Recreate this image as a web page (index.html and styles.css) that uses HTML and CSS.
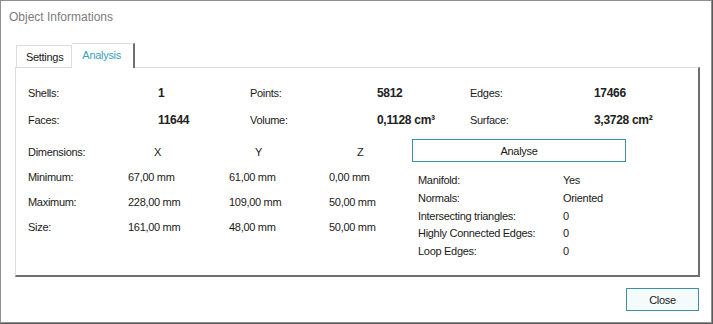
FILE: index.html
```html
<!DOCTYPE html>
<html lang="en">

<head>
    <meta charset="UTF-8">
    <title>Object Informations</title>
    <link rel="stylesheet" href="styles.css">
</head>

<body>
    <div class="window">
        <div class="title">Object Informations</div>

        <!-- Abas -->
        <div class="tabs">
            <div class="tab">Settings</div>
            <div class="tab tab-active">Analysis</div>
        </div>

        <div class="panel">
            <!-- Contagens -->
            <div class="stats">
                <span>Shells:</span><b>1</b>
                <span>Points:</span><b>5812</b>
                <span>Edges:</span><b>17466</b>
                <span>Faces:</span><b>11644</b>
                <span>Volume:</span><b>0,1128 cm³</b>
                <span>Surface:</span><b>3,3728 cm²</b>
            </div>

            <div class="lower">
                <!-- Dimensões -->
                <div class="dims">
                    <span>Dimensions:</span>
                    <span class="axis">X</span>
                    <span class="axis">Y</span>
                    <span class="axis axis-z">Z</span>

                    <span>Minimum:</span>
                    <span>67,00 mm</span>
                    <span>61,00 mm</span>
                    <span>0,00 mm</span>

                    <span>Maximum:</span>
                    <span>228,00 mm</span>
                    <span>109,00 mm</span>
                    <span>50,00 mm</span>

                    <span>Size:</span>
                    <span>161,00 mm</span>
                    <span>48,00 mm</span>
                    <span>50,00 mm</span>
                </div>

                <!-- Resultado da análise -->
                <div class="analysis">
                    <button class="btn btn-wide">Analyse</button>
                    <div class="checks">
                        <span>Manifold:</span><span>Yes</span>
                        <span>Normals:</span><span>Oriented</span>
                        <span>Intersecting triangles:</span><span>0</span>
                        <span>Highly Connected Edges:</span><span>0</span>
                        <span>Loop Edges:</span><span>0</span>
                    </div>
                </div>
            </div>
        </div>

        <div class="footer">
            <button class="btn btn-close">Close</button>
        </div>
    </div>
</body>

</html>
```

FILE: styles.css
```css
/* Estilos gerais */
body {
    margin: 0;
    background-color: #5a5a5a;
    font-family: "Liberation Sans", Arial, sans-serif;
    font-size: 11px;
    letter-spacing: -0.3px;
    color: #1a1a1a;
}

.window {
    box-sizing: border-box;
    width: 712px;
    height: 323px;
    background-color: #ffffff;
    border: 1px solid #8f8f8f;
}

.title {
    height: 42px;
    padding-left: 8px;
    padding-top: 8px;
    box-sizing: border-box;
    font-size: 12px;
    line-height: 16px;
    letter-spacing: 0;
    color: #7c7c7c;
}

/* Abas */
.tabs {
    display: flex;
    align-items: flex-end;
    height: 24px;
    margin-left: 15px;
}

.tab {
    box-sizing: border-box;
    height: 22px;
    padding: 0 8px 0 9px;
    line-height: 23px;
    border: 1px solid #dcdcdc;
    border-bottom: none;
    background-color: #ffffff;
}

.tab-active {
    position: relative;
    z-index: 1;
    height: 25px;
    margin-bottom: -1px;
    padding: 0 12px 0 10px;
    line-height: 22px;
    color: #3a9fb8;
    border-left: none;
    border-right: 2px solid #6f6f6f;
}

/* Painel */
.panel {
    box-sizing: border-box;
    width: 685px;
    height: 210px;
    margin-left: 14px;
    padding: 12px 0 0 12px;
    border-top: 1px solid #dcdcdc;
    border-left: 1px solid #dcdcdc;
    border-right: 2px solid #6f6f6f;
    border-bottom: 2px solid #6f6f6f;
}

.stats {
    display: grid;
    grid-template-columns: 130px 92px 127px 93px 124px 80px;
    grid-auto-rows: 27px;
    line-height: 27px;
}

.stats b {
    font-size: 12px;
    letter-spacing: -0.3px;
    color: #222;
}

.lower {
    display: flex;
}

.dims {
    display: grid;
    grid-template-columns: 100px 101px 100px 83px;
    grid-auto-rows: 25px;
    line-height: 25px;
    margin-top: 6px;
}

.axis {
    padding-left: 26px;
}

.axis-z {
    padding-left: 28px;
}

.analysis {
    margin-top: 5px;
}

/* Botões */
.btn {
    box-sizing: border-box;
    height: 23px;
    padding: 0;
    font-family: inherit;
    font-size: 11px;
    letter-spacing: -0.3px;
    color: #1a1a1a;
    background-color: #ffffff;
    border: 1px solid #3e8fa2;
}

.btn-wide {
    width: 214px;
}

.checks {
    display: grid;
    grid-template-columns: 145px 80px;
    grid-auto-rows: 17.8px;
    line-height: 17.8px;
    margin-top: 10px;
    padding-left: 6px;
}

.footer {
    display: flex;
    justify-content: flex-end;
    padding-top: 11px;
    padding-right: 12px;
}

.btn-close {
    width: 73px;
    background-color: #f4fbfc;
}
```
